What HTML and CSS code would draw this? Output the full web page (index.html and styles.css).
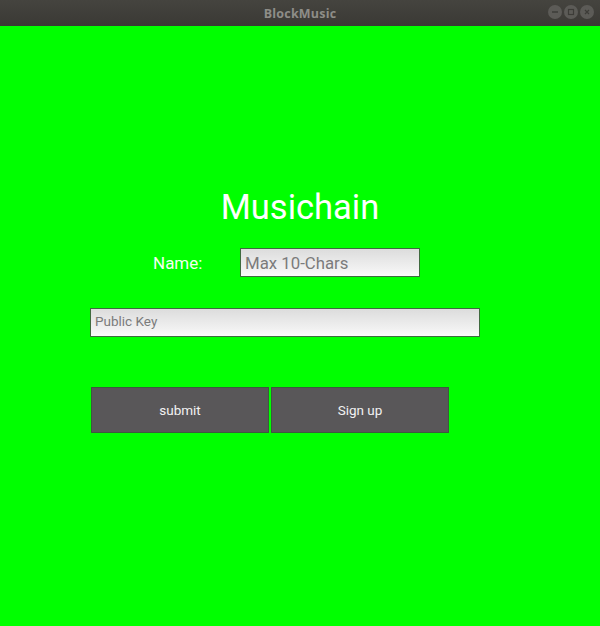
FILE: index.html
```html
<!DOCTYPE html>
<html>
<head>
<meta charset="utf-8">
<title>BlockMusic</title>
<link rel="stylesheet" href="styles.css">
</head>
<body>
<div class="titlebar">
  <span class="wtitle">BlockMusic</span>
  <div class="wbtns">
    <span class="wbtn"><svg width="14" height="14" viewBox="0 0 14 14"><line x1="4" y1="7" x2="10" y2="7" stroke="#3d3c38" stroke-width="1.5"/></svg></span>
    <span class="wbtn"><svg width="14" height="14" viewBox="0 0 14 14"><rect x="4.5" y="4.5" width="5" height="5" fill="none" stroke="#3d3c38" stroke-width="1.2"/></svg></span>
    <span class="wbtn"><svg width="14" height="14" viewBox="0 0 14 14"><path d="M5 5 L9 9 M9 5 L5 9" stroke="#3d3c38" stroke-width="1.2"/></svg></span>
  </div>
</div>
<div class="app">
  <h1 class="title">Musichain</h1>
  <div class="name-row">
    <label class="name-label">Name:</label>
    <input class="field field-name" type="text" placeholder="Max 10-Chars">
  </div>
  <div class="key-row">
    <input class="field field-key" type="text" placeholder="Public Key">
  </div>
  <div class="buttons">
    <button class="btn">submit</button>
    <button class="btn">Sign up</button>
  </div>
</div>
</body>
</html>
```
FILE: styles.css
```css
html, body {
  margin: 0;
  padding: 0;
  width: 600px;
  height: 626px;
  overflow: hidden;
  font-family: Roboto, "Liberation Sans", sans-serif;
}
.titlebar {
  height: 26px;
  background: linear-gradient(#45443f, #3a3935);
  display: flex;
  align-items: center;
  justify-content: center;
  position: relative;
}
.wtitle {
  font-family: "Open Sans", "DejaVu Sans", sans-serif;
  font-weight: 700;
  font-size: 12.5px;
  color: #8e8d88;
  letter-spacing: 0.2px;
}
.wbtns {
  position: absolute;
  right: 6px;
  top: 5px;
  display: flex;
  gap: 2px;
}
.wbtn {
  width: 14px;
  height: 14px;
  border-radius: 50%;
  background: #5c5b57;
  display: flex;
}
.app {
  background: #00ff00;
  height: 600px;
  display: flex;
  flex-direction: column;
}
.title {
  margin: 161px 0 0 0;
  text-align: center;
  font-weight: 400;
  font-size: 34.5px;
  line-height: 40px;
  color: #ffffff;
}
.name-row {
  display: flex;
  align-items: center;
  margin-top: 21px;
  padding-left: 153px;
  height: 29px;
}
.name-label {
  width: 87px;
  font-size: 17px;
  color: #f4fff0;
}
.field {
  box-sizing: border-box;
  height: 29px;
  border: 1px solid #3f6a3f;
  background: linear-gradient(#dcdcdc, #f0f0f0 70%, #fbfbfb);
  font-family: Roboto, "Liberation Sans", sans-serif;
  padding: 0 4px;
  margin: 0;
  outline: none;
}
.field::placeholder {
  color: #7b7b7b;
  opacity: 1;
}
.field-name {
  width: 180px;
  font-size: 16.8px;
}
.key-row {
  display: flex;
  margin-top: 31px;
  padding-left: 90px;
}
.field-key {
  width: 390px;
  font-size: 13.5px;
  padding-bottom: 4px;
}
.buttons {
  display: flex;
  gap: 2px;
  margin-top: 50px;
  padding-left: 91px;
}
.btn {
  box-sizing: border-box;
  width: 178px;
  height: 46px;
  background: #595759;
  border: 1px solid #3d5a3d;
  color: #f2f2f2;
  font-family: Roboto, "Liberation Sans", sans-serif;
  font-size: 13.5px;
  margin: 0;
  padding: 0;
}
```
